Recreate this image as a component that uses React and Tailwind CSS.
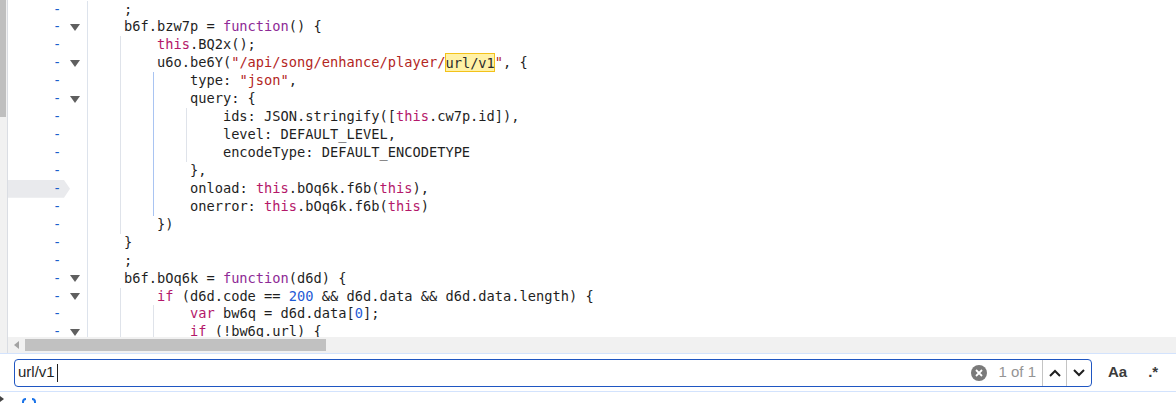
import React from 'react';

const COLORS = {
  d: 'text-[#1f1f1f]',
  k: 'text-[#8e2a96]',
  t: 'text-[#b4186a]',
  s: 'text-[#b3261e]',
  n: 'text-[#1f5bd6]',
};

// [indent, tokens, fold]
const rows = [
  [0, [[';']]],
  [0, [['b6f.bzw7p = '], ['function', 'k'], ['() {']], true],
  [1, [['this', 't'], ['.BQ2x();']]],
  [1, [['u6o.be6Y('], ['"/api/song/enhance/player/', 's'], ['url/v1', 'hl'], ['"', 's'], [', {']], true],
  [2, [['type: '], ['"json"', 's'], [',']]],
  [2, [['query: {']], true],
  [3, [['ids: JSON.stringify(['], ['this', 't'], ['.cw7p.id]),']]],
  [3, [['level: DEFAULT_LEVEL,']]],
  [3, [['encodeType: DEFAULT_ENCODETYPE']]],
  [2, [['},']]],
  [2, [['onload: '], ['this', 't'], ['.bOq6k.f6b('], ['this', 't'], ['),']]],
  [2, [['onerror: '], ['this', 't'], ['.bOq6k.f6b('], ['this', 't'], [')']]],
  [1, [['})']]],
  [0, [['}']]],
  [0, [[';']]],
  [0, [['b6f.bOq6k = '], ['function', 'k'], ['(d6d) {']], true],
  [1, [['if', 't'], [' (d6d.code == '], ['200', 'n'], [' && d6d.data && d6d.data.length) {']], true],
  [2, [['var', 't'], [' bw6q = d6d.data['], ['0', 'n'], ['];']]],
  [2, [['if', 't'], [' (!bw6q.url) {']], true],
];

const ACTIVE_ROW = 10;

function FoldArrow() {
  return (
    <svg width="10" height="7" viewBox="0 0 10 7">
      <polygon points="0,0 10,0 5,7" fill="#5f5f5f" />
    </svg>
  );
}

function CodeRow({ row, index }) {
  const [indent, tokens, fold] = row;
  const active = index === ACTIVE_ROW;
  return (
    <div className="flex h-[17.94px]">
      <div className="flex w-[80px] shrink-0 items-center border-r border-[#dde3ec]">
        <div
          className={
            'flex h-full w-[62px] items-center ' +
            (active ? 'bg-[#e9eaed] [clip-path:polygon(0_0,56px_0,62px_50%,56px_100%,0_100%)]' : '')
          }
        >
          <span className="ml-[45px] w-[8.25px] text-center text-[#1b5fcc]">-</span>
        </div>
        <div className="flex w-[10px] items-center justify-center">{fold && <FoldArrow />}</div>
      </div>
      <div className="relative flex-1 whitespace-pre pl-[36px]">
        {Array.from({ length: indent }).map((_, i) => (
          <div
            key={i}
            className={
              'absolute top-0 bottom-0 w-px ' +
              (i === 1 && index >= 4 && index <= 11 ? 'bg-[#a9c4f2]' : 'bg-[#dfe3ea]')
            }
            style={{ left: 32 + i * 33 }}
          />
        ))}
        <span>{'    '.repeat(indent)}</span>
        {tokens.map(([text, c], i) =>
          c === 'hl' ? (
            <span key={i} className="bg-[#fff1a6] py-[1.5px] text-[#2b2b2b] shadow-[inset_0_0_0_1px_#f3c21a]">
              {text}
            </span>
          ) : (
            <span key={i} className={COLORS[c || 'd']}>
              {text}
            </span>
          )
        )}
      </div>
    </div>
  );
}

function Chevron({ up }) {
  return (
    <svg width="12" height="8" viewBox="0 0 12 8">
      <polyline
        points={up ? '1,7 6,2 11,7' : '1,1 6,6 11,1'}
        fill="none"
        stroke="#1f1f1f"
        strokeWidth="2"
      />
    </svg>
  );
}

export default function App() {
  return (
    <div className="h-[403px] w-[1176px] overflow-hidden bg-white">
      <div className="flex h-[353px]">
        <div className="flex w-[8px] shrink-0 flex-col border-r border-[#dadde3] bg-[#f1f1f1]">
          <div className="h-[117px] w-[6px] bg-[#bfbfbf]" />
        </div>
        <div className="flex min-w-0 flex-1 flex-col">
          <div className="h-[337px] overflow-hidden font-['DejaVu_Sans_Mono',monospace] text-[13.7px] leading-[17.94px]">
            <div className="mt-[0.5px]">
              {rows.map((r, i) => (
                <CodeRow key={i} row={r} index={i} />
              ))}
            </div>
          </div>
          <div className="flex h-[16px] items-center bg-[#f1f1f1]">
            <svg width="5" height="8" viewBox="0 0 5 8" className="ml-[6px]">
              <polygon points="5,0 5,8 0,4" fill="#a3a3a3" />
            </svg>
            <div className="ml-[6px] h-[12px] w-[301px] bg-[#c1c1c1]" />
          </div>
        </div>
      </div>

      <div className="flex h-[39px] items-center border-y border-[#d3e3fd] font-['Liberation_Sans',Arial,sans-serif]">
        <div className="ml-[14px] flex h-[28px] w-[1078px] items-center rounded-[4px] border border-[#1f56c2]">
          <span className="ml-[3px] text-[15px] text-[#1f1f1f]">url/v1</span>
          <span className="ml-[2px] h-[18px] w-px bg-[#1f1f1f]" />
          <div className="ml-auto flex h-full items-center">
            <svg width="16" height="16" viewBox="0 0 16 16">
              <circle cx="8" cy="8" r="8" fill="#7a7a7a" />
              <path d="M5 5 L11 11 M11 5 L5 11" stroke="#fff" strokeWidth="1.8" />
            </svg>
            <span className="ml-[11px] text-[15px] text-[#949494]">1 of 1</span>
            <div className="ml-[6px] flex h-full w-[24px] items-center justify-center border-l border-[#c4c4c4]">
              <Chevron up />
            </div>
            <div className="flex h-full w-[25px] items-center justify-center border-l border-[#c4c4c4]">
              <Chevron />
            </div>
          </div>
        </div>
        <span className="ml-[16px] text-[15px] font-bold text-[#3b3b3b]">Aa</span>
        <span className="ml-[21px] text-[15px] font-bold text-[#3b3b3b]">.*</span>
      </div>

      <div className="flex h-[12px] items-start">
        <svg width="4" height="6" viewBox="0 0 4 6" className="mt-[4px]">
          <polygon points="0,0 4,3 0,6" fill="#444" />
        </svg>
        <svg width="16" height="14" viewBox="0 0 16 14" className="ml-[17px] mt-[6px]">
          <path d="M5 1 Q2 1 2 4 L2 5 Q2 7 0.5 7 Q2 7 2 9 L2 10 Q2 13 5 13" fill="none" stroke="#1a73e8" strokeWidth="2" />
          <path d="M11 1 Q14 1 14 4 L14 5 Q14 7 15.5 7 Q14 7 14 9 L14 10 Q14 13 11 13" fill="none" stroke="#1a73e8" strokeWidth="2" />
        </svg>
      </div>
    </div>
  );
}
